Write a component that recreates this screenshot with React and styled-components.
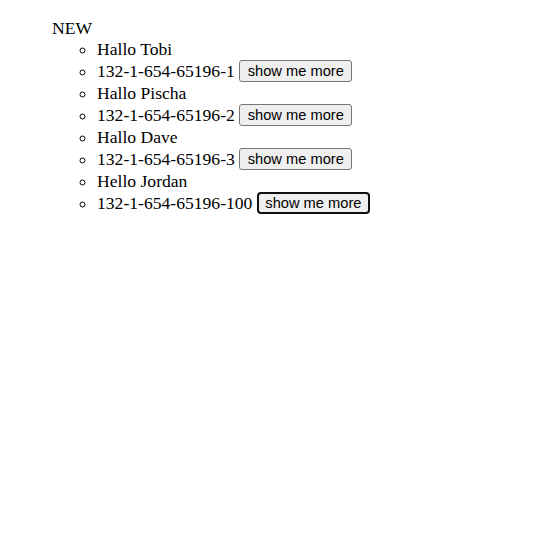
import React from "react";
import styled, { createGlobalStyle } from "styled-components";

const GlobalStyle = createGlobalStyle`
    body {
        margin: 9px;
        font-family: "Liberation Serif", "Times New Roman", serif;
        font-size: 17.6px;
        color: #000;
        background: #fff;
    }
`;

const people = [
    { greeting: "Hallo Tobi", id: "132-1-654-65196-1" },
    { greeting: "Hallo Pischa", id: "132-1-654-65196-2" },
    { greeting: "Hallo Dave", id: "132-1-654-65196-3" },
    { greeting: "Hello Jordan", id: "132-1-654-65196-100", focused: true },
];

export default () => {
    return (
        <>
            <GlobalStyle />
            <OuterList>
                <Heading>NEW</Heading>
                <InnerList>
                    {people.map((p) => (
                        <React.Fragment key={p.id}>
                            <Item>{p.greeting}</Item>
                            <Item>
                                {p.id} <MoreButton focused={p.focused}>show me more</MoreButton>
                            </Item>
                        </React.Fragment>
                    ))}
                </InnerList>
            </OuterList>
        </>
    );
};

const OuterList = styled.ul`
    margin: 10px 0 0;
    padding-left: 43px;
    list-style: none;
`;

const Heading = styled.li`
    line-height: 19px;
`;

const InnerList = styled.ul`
    margin: 0;
    padding-left: 45px;
    list-style: circle;
`;

const Item = styled.li`
    line-height: 22px;
    height: 22px;
`;

const MoreButton = styled.button`
    box-sizing: border-box;
    height: 22px;
    vertical-align: top;
    margin: 0;
    font-family: "Liberation Sans", Arial, sans-serif;
    font-size: 14.67px;
    line-height: 18px;
    padding: ${({ focused }) => (focused ? "0 6.5px" : "1px 7.5px")};
    border: ${({ focused }) => (focused ? "2px solid #101010" : "1px solid #767676")};
    border-radius: ${({ focused }) => (focused ? "4px" : "3px")};
    background: #efefef;
    color: #000;
    outline: none;
`;
